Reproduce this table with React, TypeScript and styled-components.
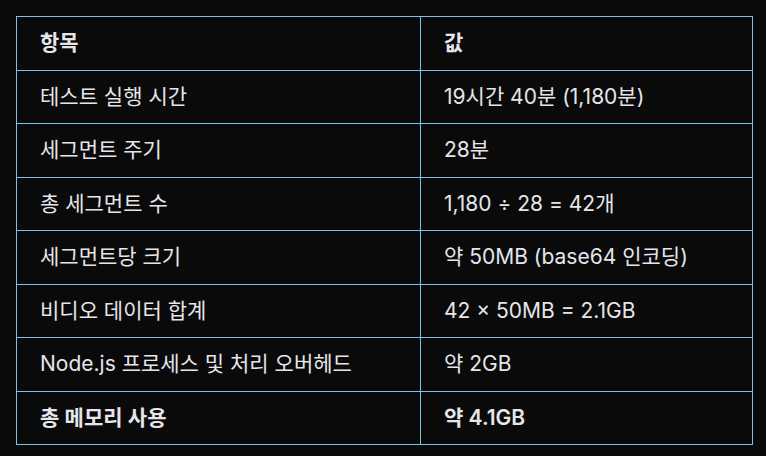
import styled, { createGlobalStyle } from "styled-components";

const GlobalStyle = createGlobalStyle`
  html, body {
    margin: 0;
    background: #0a0a0a;
  }
  body {
    padding: 16px;
    font-family: Inter, "Noto Sans CJK KR", sans-serif;
    color: #e5e5ea;
  }
`;

const rows: [string, string][] = [
    ["테스트 실행 시간", "19시간 40분 (1,180분)"],
    ["세그먼트 주기", "28분"],
    ["총 세그먼트 수", "1,180 ÷ 28 = 42개"],
    ["세그먼트당 크기", "약 50MB (base64 인코딩)"],
    ["비디오 데이터 합계", "42 × 50MB = 2.1GB"],
    ["Node.js 프로세스 및 처리 오버헤드", "약 2GB"],
];

function App() {
    return (
        <>
            <GlobalStyle/>
            <Table>
                <colgroup>
                    <col style={{width: 404}}/>
                    <col/>
                </colgroup>
                <thead>
                <tr>
                    <HeadCell>항목</HeadCell>
                    <HeadCell>값</HeadCell>
                </tr>
                </thead>
                <tbody>
                {rows.map(([label, value]) => (
                    <tr key={label}>
                        <Cell>{label}</Cell>
                        <Cell>{value}</Cell>
                    </tr>
                ))}
                <tr>
                    <Cell $bold>총 메모리 사용</Cell>
                    <Cell $bold>약 4.1GB</Cell>
                </tr>
                </tbody>
            </Table>
        </>
    )
}

const Table = styled.table`
  width: 737px;
  border-collapse: collapse;
  table-layout: fixed;
  font-size: 21px;
`;

const Cell = styled.td<{ $bold?: boolean }>`
  border: 1px solid #7cc3e3;
  padding: 13px 23px;
  height: 26.5px;
  line-height: 26.5px;
  text-align: left;
  font-weight: ${p => (p.$bold ? 600 : 400)};
  white-space: nowrap;
`;

const HeadCell = styled(Cell).attrs({as: "th"})`
  font-weight: 600;
`;

export default App
